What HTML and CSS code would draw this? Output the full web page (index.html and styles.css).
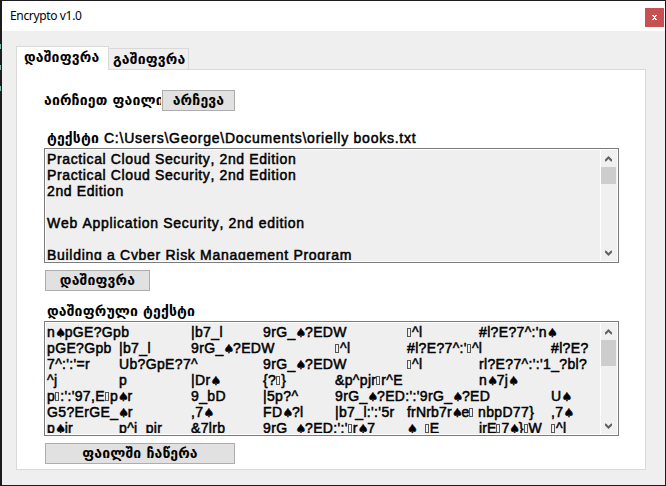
FILE: index.html
```html
<!DOCTYPE html>
<html lang="ka">
<head>
<meta charset="utf-8">
<title>Encrypto v1.0</title>
<link rel="stylesheet" href="styles.css">
</head>
<body>
<div class="desktop">
<main class="window">
  <header class="titlebar">
    <span class="title">Encrypto v1.0</span>
    <button class="close" aria-label="Close"><svg width="5" height="5" viewBox="0 0 5 5" shape-rendering="crispEdges"><path fill="#fff" d="M0 0h2v1H0zM3 0h2v1H3zM1 1h3v1H1zM2 2h1v1H2zM1 3h3v1H1zM0 4h2v1H0zM3 4h2v1H3z"/></svg></button>
  </header>
  <nav class="tabs">
    <div class="tab active"><span class="ka">დაშიფვრა</span></div>
    <div class="tab"><span class="ka">გაშიფვრა</span></div>
  </nav>
  <section class="page">
    <div class="choose">
      <span class="choose-label ka">აირჩიეთ ფაილი</span>
      <button class="btn btn-choose ka">არჩევა</button>
    </div>
    <div class="caption cap-source"><span class="ka word">ტექსტი</span><span class="path">C:\Users\George\Documents\orielly books.txt</span></div>
    <div class="box">
      <pre class="text">Practical Cloud Security, 2nd Edition
Practical Cloud Security, 2nd Edition
2nd Edition

<span class="web">Web Application Security, 2nd edition</span>

<span class="web">Building a Cyber Risk Management Program</span></pre>
      <div class="scroll">
        <svg class="arrow" width="7" height="6" viewBox="0 0 7 6"><path d="M0 5 3.5 1.5 7 5" fill="none" stroke="#606060" stroke-width="2"/></svg>
        <div class="thumb"></div>
        <svg class="arrow down" width="7" height="6" viewBox="0 0 7 6"><path d="M0 1 3.5 4.5 7 1" fill="none" stroke="#606060" stroke-width="2"/></svg>
      </div>
    </div>
    <button class="btn btn-encrypt ka">დაშიფვრა</button>
    <div class="caption cap-cipher ka">დაშიფრული ტექსტი</div>
    <div class="box">
      <pre class="text cipher">n<b>♠</b>pGE?Gpb&#9;|b7_l&#9;9rG_<b>♠</b>?EDW&#9;<i></i>^l&#9;#l?E?7^:'n<b>♠</b>
pGE?Gpb&#9;|b7_l&#9;9rG_<b>♠</b>?EDW&#9;<i></i>^l&#9;#l?E?7^:'<i></i>^l&#9;#l?E?
7^:':'=r&#9;Ub?GpE?7^&#9;9rG_<b>♠</b>?EDW&#9;<i></i>^l&#9;rl?E?7^:':'1_?bl?
^j&#9;p&#9;|Dr<b>♠</b>&#9;{?<i></i>}&#9;<span class="wide">&amp;p^pjr<i></i>r^E</span>&#9;n<b>♠</b>7j<b>♠</b>
p<i></i>:':'97,E<i></i>p<b>♠</b>r&#9;9_bD&#9;|5p?^&#9;9rG_<b>♠</b>?ED:':'9rG_<b>♠</b>?ED&#9;U<b>♠</b>
G5?ErGE_<b>♠</b>r&#9;,7<b>♠</b>&#9;FD<b>♠</b>?l&#9;|b7_l:':'5r&#9;<span class="run">frNrb7r<b>♠</b>e<i></i></span>nbpD77}&#9;,7<b>♠</b>
p<b>♠</b>jr&#9;p^j_pjr&#9;&amp;7lrb&#9;9rG_<b>♠</b>?ED:':'<i></i>r<b>♠</b>7&#9;<b>♠</b>_<i></i>E&#9;<span class="tail">irE<i></i>7<b>♠</b>}<i></i>W</span>&#9;<i></i>^l</pre>
      <div class="scroll">
        <svg class="arrow" width="7" height="6" viewBox="0 0 7 6"><path d="M0 5 3.5 1.5 7 5" fill="none" stroke="#606060" stroke-width="2"/></svg>
        <div class="thumb tall"></div>
        <svg class="arrow down" width="7" height="6" viewBox="0 0 7 6"><path d="M0 1 3.5 4.5 7 1" fill="none" stroke="#606060" stroke-width="2"/></svg>
      </div>
    </div>
    <button class="btn btn-save ka">ფაილში ჩაწერა</button>
  </section>
</main>
</div>
</body>
</html>
```
FILE: styles.css
```css
* { box-sizing: border-box; }
body { margin: 0; overflow: hidden; }
button { font: inherit; color: inherit; padding: 0; border-radius: 0; }
.desktop {
  width: 666px; height: 486px; padding: 1px 1px 1px 2px;
  background: linear-gradient(#70b8a6, #70b8a6) 0 44px / 1px 5px no-repeat,
    linear-gradient(#70b8a6, #70b8a6) 0 65px / 1px 5px no-repeat,
    linear-gradient(#70b8a6, #70b8a6) 0 86px / 1px 5px no-repeat, #1b1b20;
}
.window {
  height: 484px; background: #efefef; color: #000;
  font-family: "Liberation Sans", "DejaVu Sans", sans-serif; font-size: 14px;
}
.titlebar {
  height: 30px; background: #fff; display: flex; justify-content: space-between;
  padding: 7px 1px 0 8px;
}
.title { font: 12px/16px "Noto Sans", sans-serif; letter-spacing: -0.35px; }
.close {
  width: 19px; height: 19px; border: 0; background: #c75050;
  display: flex; align-items: center; justify-content: center;
}
.ka {
  font-family: "DejaVu Sans", sans-serif; font-weight: bold; font-size: 14px;
  letter-spacing: 0.15px; white-space: nowrap;
}
.tabs { display: flex; align-items: flex-end; height: 38px; padding-left: 14px; }
.tab {
  width: 80px; height: 21px; border: 1px solid #d9d9d9; border-left: 0; border-bottom: 0;
  line-height: 20px; padding-left: 4px; overflow: hidden;
}
.tab.active {
  position: relative; width: 93px; height: 24px; margin-bottom: -1px;
  background: #fff; border-left: 1px solid #d9d9d9; padding-left: 7px; z-index: 1;
}
.page {
  margin-left: 14px; width: 630px; height: 401px; background: #fff;
  border: 1px solid #d9d9d9; padding: 20px 0 0 27px;
}
.choose { display: flex; height: 21px; }
.choose-label { width: 117px; margin-right: 1px; line-height: 20px; overflow: hidden; }
.btn {
  display: block; height: 21px; line-height: 19px; background: #e1e1e1;
  border: 1px solid #adadad; text-align: center;
}
.btn-choose { width: 73px; }
.btn-encrypt { width: 105px; margin: 7px 0 0 1px; }
.btn-save { width: 190px; margin: 7px 0 0 1px; }
.caption { height: 16px; line-height: 16px; padding-left: 3px; }
.cap-source { display: flex; margin-top: 19px; margin-bottom: 2px; }
.word { width: 57px; }
.path {
  font-kerning: none; letter-spacing: 0.75px; -webkit-text-stroke: 0.5px #000;
  white-space: nowrap;
}
.cap-cipher { margin-top: 12px; margin-bottom: 2px; }
.box {
  width: 575px; height: 115px; border: 1px solid #7a7a7a; background: #fff;
  padding: 1px; display: flex; gap: 1px;
}
.text {
  margin: 0; width: 554px; height: 111px; padding: 1px 0 0 1px; background: #efefef;
  border-bottom: 1px solid #efefef;
  font: 14px/16px "Liberation Sans", "DejaVu Sans", sans-serif;
  font-kerning: none; letter-spacing: 0.62px; -webkit-text-stroke: 0.5px #000;
  overflow: hidden;
}
.web { letter-spacing: 0.7px; }
.cipher { tab-size: 72px; letter-spacing: 0.35px; }
.cipher b {
  display: inline-block; width: 9.5px; font: 12px/11px "DejaVu Sans", sans-serif;
  letter-spacing: 0; -webkit-text-stroke: 0.5px #000;
}
.cipher i {
  display: inline-block; width: 4px; height: 9px; margin-right: 1px;
  border: 1px solid #555;
}
.wide { display: inline-block; width: 73px; }
.run { display: inline-block; width: 71px; letter-spacing: 0.2px; }
.tail { letter-spacing: 0.1px; }
.scroll { width: 16px; height: 111px; background: #f0f0f0; display: flex; flex-direction: column; }
.arrow { margin: 6px 0 5px 4px; flex: none; }
.thumb { width: 15px; height: 17px; background: #cdcdcd; }
.thumb.tall { height: 26px; }
.arrow.down { margin-top: auto; }
```
